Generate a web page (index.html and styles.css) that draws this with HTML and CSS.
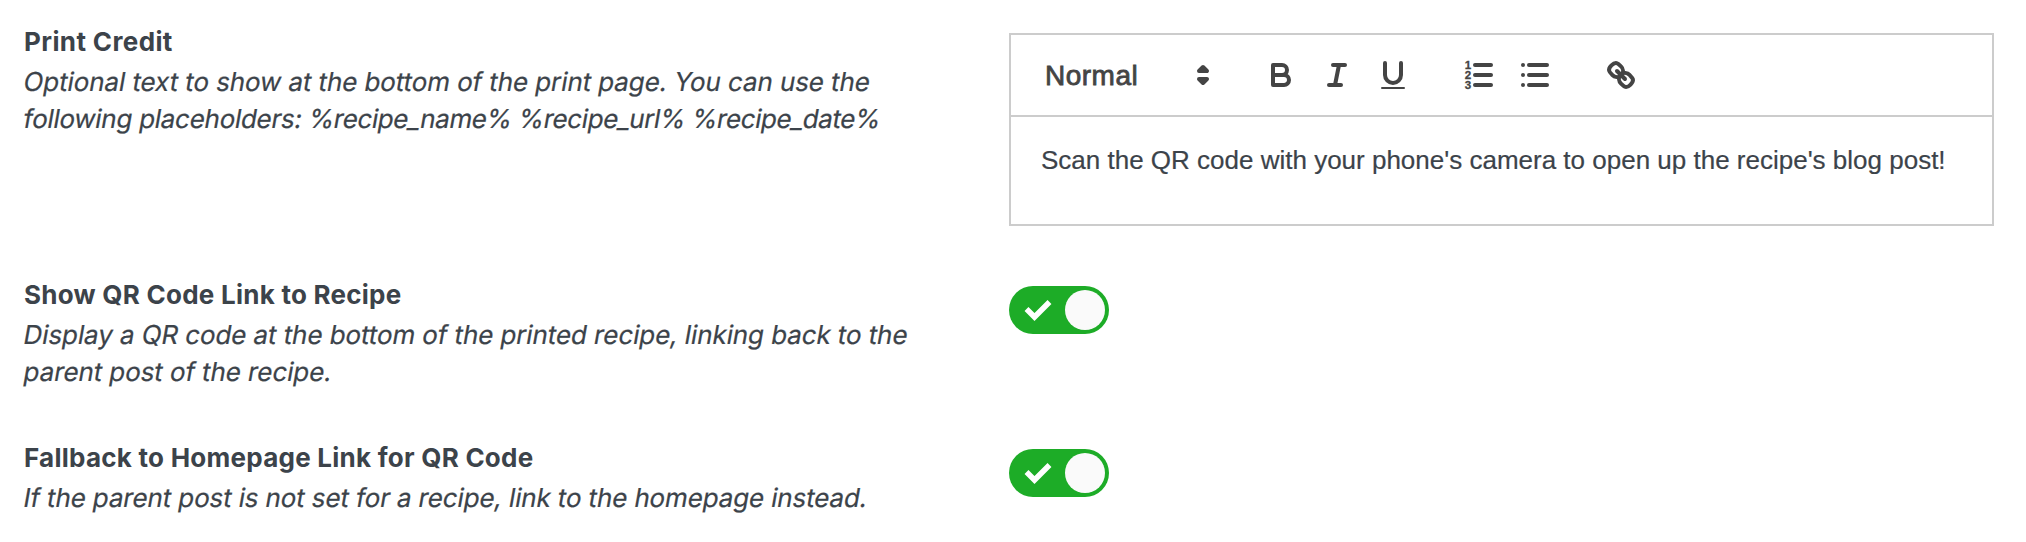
FILE: index.html
```
<!DOCTYPE html>
<html lang="en">
<head>
  <meta charset="UTF-8" />
  <title>Print Settings</title>
  <link rel="stylesheet" href="styles.css">
</head>
<body>
  <div class="settings">
    <div class="setting setting-credit">
      <div class="setting-label">
        <div class="setting-name name-credit">Print Credit</div>
        <div class="setting-description">
          <span class="line">Optional text to show at the bottom of the print page. You can use the</span>
          <span class="line line-tight">following placeholders: <span class="placeholders">%recipe_name% %recipe_url% %recipe_date%</span></span>
        </div>
      </div>
      <div class="editor">
        <div class="toolbar">
          <div class="picker">
            <span class="picker-label">Normal</span>
            <svg class="icon" viewBox="0 0 18 18">
              <polygon class="stroke fill" points="7 11 9 13 11 11 7 11" />
              <polygon class="stroke fill" points="7 7 9 5 11 7 7 7" />
            </svg>
          </div>
          <div class="formats">
            <button type="button" aria-label="Bold">
              <svg class="icon" viewBox="0 0 18 18">
                <path class="stroke" d="M5,4H9.5A2.5,2.5,0,0,1,12,6.5v0A2.5,2.5,0,0,1,9.5,9H5V4Z" />
                <path class="stroke" d="M5,9h5.5A2.5,2.5,0,0,1,13,11.5v0A2.5,2.5,0,0,1,10.5,14H5V9Z" />
              </svg>
            </button>
            <button type="button" aria-label="Italic">
              <svg class="icon" viewBox="0 0 18 18">
                <line class="stroke" x1="7" x2="13" y1="4" y2="4" />
                <line class="stroke" x1="5" x2="11" y1="14" y2="14" />
                <line class="stroke" x1="8" x2="10" y1="14" y2="4" />
              </svg>
            </button>
            <button type="button" aria-label="Underline">
              <svg class="icon" viewBox="0 0 18 18">
                <path class="stroke" d="M5,3V9a4.012,4.012,0,0,0,4,4H9a4.012,4.012,0,0,0,4-4V3" />
                <rect class="fill" height="1" rx="0.5" ry="0.5" width="12" x="3" y="15" />
              </svg>
            </button>
          </div>
          <div class="formats">
            <button type="button" aria-label="Ordered list">
              <svg class="icon" viewBox="0 0 18 18">
                <line class="stroke" x1="7" x2="15" y1="4" y2="4" />
                <line class="stroke" x1="7" x2="15" y1="9" y2="9" />
                <line class="stroke" x1="7" x2="15" y1="14" y2="14" />
                <text class="digit" x="1.9" y="6">1</text>
                <text class="digit" x="1.9" y="11">2</text>
                <text class="digit" x="1.9" y="16">3</text>
              </svg>
            </button>
            <button type="button" aria-label="Bullet list">
              <svg class="icon" viewBox="0 0 18 18">
                <line class="stroke" x1="6" x2="15" y1="4" y2="4" />
                <line class="stroke" x1="6" x2="15" y1="9" y2="9" />
                <line class="stroke" x1="6" x2="15" y1="14" y2="14" />
                <line class="stroke" x1="3" x2="3" y1="4" y2="4" />
                <line class="stroke" x1="3" x2="3" y1="9" y2="9" />
                <line class="stroke" x1="3" x2="3" y1="14" y2="14" />
              </svg>
            </button>
          </div>
          <div class="formats">
            <button type="button" aria-label="Link">
              <svg class="icon" viewBox="0 0 18 18">
                <line class="stroke" x1="7" x2="11" y1="7" y2="11" />
                <path class="stroke" d="M8.9,4.577a3.476,3.476,0,0,1,.36,4.679A3.476,3.476,0,0,1,4.577,8.9C3.185,7.5,2.035,6.4,4.217,4.217S7.5,3.185,8.9,4.577Z" />
                <path class="stroke" d="M13.423,9.1a3.476,3.476,0,0,0-4.679-.36,3.476,3.476,0,0,0,.36,4.679c1.392,1.392,2.5,2.542,4.679.36S14.815,10.5,13.423,9.1Z" />
              </svg>
            </button>
          </div>
        </div>
        <div class="editor-content">Scan the QR code with your phone's camera to open up the recipe's blog post!</div>
      </div>
    </div>

    <div class="setting setting-qr">
      <div class="setting-label">
        <div class="setting-name">Show QR Code Link to Recipe</div>
        <div class="setting-description">
          <span class="line">Display a QR code at the bottom of the printed recipe, linking back to the</span>
          <span class="line">parent post of the recipe.</span>
        </div>
      </div>
      <div class="toggle">
        <svg class="check" viewBox="0 0 28 22"><path d="M2.5 10L10.5 18L25.5 3" /></svg>
        <span class="knob"></span>
      </div>
    </div>

    <div class="setting">
      <div class="setting-label">
        <div class="setting-name">Fallback to Homepage Link for QR Code</div>
        <div class="setting-description desc-fallback">
          <span class="line">If the parent post is not set for a recipe, link to the homepage instead.</span>
        </div>
      </div>
      <div class="toggle">
        <svg class="check" viewBox="0 0 28 22"><path d="M2.5 10L10.5 18L25.5 3" /></svg>
        <span class="knob"></span>
      </div>
    </div>
  </div>
</body>
</html>
```
FILE: styles.css
```
body {
  margin: 0;
  background: #fff;
  color: #3c434a;
  font-family: Inter, sans-serif;
  font-size: 26px;
  overflow: hidden;
}
.settings {
  padding: 23px 32px 0 24px;
}
.setting {
  display: grid;
  grid-template-columns: 985px 985px;
  align-items: start;
}
.setting-credit {
  height: 253px;
}
.setting-qr {
  height: 163px;
}
.setting-name {
  font-weight: 700;
  line-height: 37px;
  margin-bottom: 3px;
  letter-spacing: 0.25px;
  white-space: nowrap;
}
.name-credit {
  letter-spacing: 0.38px;
}
.setting-description {
  line-height: 37px;
  letter-spacing: -0.1px;
  white-space: nowrap;
  -webkit-text-stroke: 0.2px #3c434a;
}
.desc-fallback {
  letter-spacing: -0.14px;
}
/* slanted upright face, keeps the two-storey a and the short f */
.line {
  display: block;
  transform: skewX(-10deg);
}
.line-tight {
  letter-spacing: -0.28px;
}
.placeholders {
  letter-spacing: -0.42px;
}

/* editor */
.editor {
  box-sizing: border-box;
  height: 193px;
  margin-top: 10px;
  border: 2px solid #ccc;
  font-family: "Liberation Sans", Arial, sans-serif;
}
.toolbar {
  display: flex;
  gap: 30px;
  height: 48px;
  padding: 16px;
  border-bottom: 2px solid #ccc;
}
.picker {
  box-sizing: border-box;
  display: flex;
  align-items: center;
  justify-content: space-between;
  width: 196px;
  padding: 0 2px 0 18px;
  color: #444;
}
.picker-label {
  padding-top: 1px;
  font-size: 28px;
  letter-spacing: 0.5px;
  -webkit-text-stroke: 0.8px #444;
}
.formats {
  display: flex;
}
.formats button {
  width: 56px;
  height: 48px;
  padding: 6px 10px;
  border: 0;
  background: none;
}
.icon {
  display: block;
  width: 36px;
  height: 36px;
}
.stroke {
  fill: none;
  stroke: #444;
  stroke-linecap: round;
  stroke-linejoin: round;
  stroke-width: 2;
}
.fill {
  fill: #444;
}
.digit {
  fill: #444;
  stroke: #444;
  stroke-width: 0.15;
  font: bold 5.8px "Liberation Sans", Arial, sans-serif;
}
.editor-content {
  padding: 25px 30px 0;
  line-height: 37px;
  white-space: nowrap;
  -webkit-text-stroke: 0.2px #3c434a;
}

/* toggle */
.toggle {
  box-sizing: border-box;
  display: flex;
  align-items: center;
  justify-content: space-between;
  width: 100px;
  height: 48px;
  margin-top: 10px;
  padding: 4px 4px 4px 15px;
  border-radius: 24px;
  background: #1dac27;
}
.check {
  width: 28px;
  height: 22px;
}
.check path {
  fill: none;
  stroke: #fff;
  stroke-width: 5.5;
}
.knob {
  width: 40px;
  height: 40px;
  border-radius: 50%;
  background: #fafafa;
}
```
